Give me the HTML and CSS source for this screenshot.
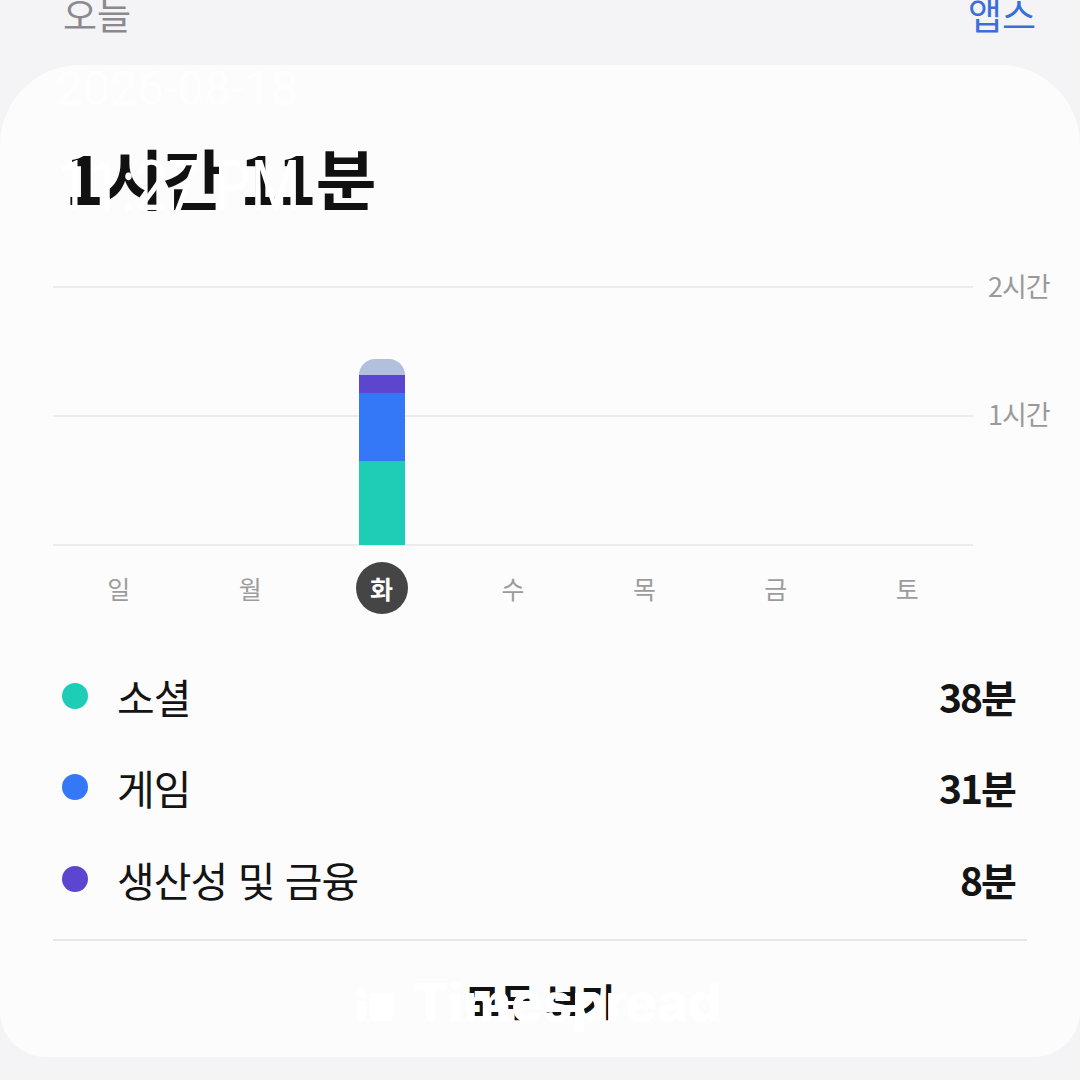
FILE: index.html
```html
<!DOCTYPE html>
<html lang="ko">
<head>
    <meta charset="UTF-8">
    <meta name="viewport" content="width=device-width, initial-scale=1.0">
    <title>오늘 - 스크린 타임</title>
    <link rel="stylesheet" href="styles.css">
</head>
<body>
    <header class="top-bar">
        <span class="tab-title">오늘</span>
        <span class="tab-link">앱스</span>
    </header>

    <main class="card">
        <h1 class="total">1시간 11분</h1>

        <section class="chart">
            <div class="chart-body">
                <div class="plot">
                    <div class="col"></div>
                    <div class="col"></div>
                    <div class="col">
                        <div class="bar">
                            <span class="seg seg-other" style="height: 16px"></span>
                            <span class="seg seg-prod" style="height: 18px"></span>
                            <span class="seg seg-game" style="height: 68px"></span>
                            <span class="seg seg-social" style="height: 84px"></span>
                        </div>
                    </div>
                    <div class="col"></div>
                    <div class="col"></div>
                    <div class="col"></div>
                    <div class="col"></div>
                </div>
                <div class="axis">
                    <span>2시간</span>
                    <span>1시간</span>
                </div>
            </div>
            <div class="days">
                <span>일</span>
                <span>월</span>
                <span class="today">화</span>
                <span>수</span>
                <span>목</span>
                <span>금</span>
                <span>토</span>
            </div>
        </section>

        <ul class="legend">
            <li><i class="dot social"></i><span class="name">소셜</span><b>38분</b></li>
            <li><i class="dot game"></i><span class="name">게임</span><b>31분</b></li>
            <li><i class="dot prod"></i><span class="name">생산성 및 금융</span><b>8분</b></li>
        </ul>

        <div class="more">모두 보기</div>

        <!-- stamp overlay from the capture app -->
        <div class="stamp-date">2026-08-18</div>
        <div class="stamp-time">11:27 PM</div>
        <div class="stamp-mark">
            <svg width="40" height="40" viewBox="0 0 40 40">
                <rect x="2" y="6" width="9" height="9" fill="#fff"/>
                <rect x="2" y="18" width="9" height="20" fill="#fff"/>
                <rect x="15" y="10" width="23" height="28" fill="#fff"/>
            </svg>
            <span>Timespread</span>
        </div>
    </main>
</body>
</html>
```

FILE: styles.css
```css
body {
    margin: 0;
    padding: 0;
    background-color: #f4f4f6;
    font-family: "Noto Sans CJK KR", "Noto Sans", sans-serif;
    overflow: hidden;
}

.top-bar {
    display: flex;
    justify-content: space-between;
    align-items: flex-end;
    height: 65px;
    padding: 0 44px 0 63px;
    box-sizing: border-box;
    font-size: 37px;
    line-height: 1;
    overflow: hidden;
}

.tab-title {
    color: #8a8a8e;
    padding-bottom: 32px;
}

.tab-link {
    color: #3a6fd8;
    padding-bottom: 32px;
}

.card {
    position: relative;
    background-color: #fcfcfc;
    height: 992px;
    border-radius: 80px 80px 46px 46px;
    padding: 0 53px;
    box-sizing: border-box;
}

.total {
    margin: 0;
    padding-top: 78px;
    padding-left: 12px;
    font-size: 66px;
    font-weight: 700;
    line-height: 1;
    color: #111;
    letter-spacing: -1px;
}

.chart {
    margin-top: 77px;
}

.chart-body {
    display: flex;
}

.plot {
    flex: 0 0 920px;
    height: 260px;
    display: flex;
    align-items: flex-end;
    background:
        linear-gradient(#ececec, #ececec) 0 0 / 100% 2px no-repeat,
        linear-gradient(#ececec, #ececec) 0 129px / 100% 2px no-repeat,
        linear-gradient(#ececec, #ececec) 0 258px / 100% 2px no-repeat;
}

.col {
    flex: 1;
    display: flex;
    justify-content: center;
}

.bar {
    width: 46px;
    display: flex;
    flex-direction: column;
    margin-bottom: 1px;
}

.seg {
    display: block;
}

.seg-other {
    background-color: #b2c0dc;
    border-radius: 23px 23px 0 0;
}

.seg-prod {
    background-color: #5c45cf;
}

.seg-game {
    background-color: #3478f7;
}

.seg-social {
    background-color: #1dcdb5;
}

.axis {
    display: flex;
    flex-direction: column;
    gap: 94px;
    padding-left: 15px;
    margin-top: -17px;
    font-size: 27px;
    color: #9a9a9a;
    line-height: 34px;
    letter-spacing: -1px;
    white-space: nowrap;
}

.days {
    display: flex;
    width: 920px;
    margin-top: 16px;
}

.days span {
    flex: 1;
    display: flex;
    justify-content: center;
    align-items: center;
    height: 52px;
    font-size: 25px;
    color: #9c9c9c;
}

.days .today {
    flex: 0 0 52px;
    margin: 0 39.7px;
    border-radius: 50%;
    background-color: #454545;
    color: #fff;
    font-weight: 700;
}

.legend {
    list-style: none;
    margin: 36px 0 0;
    padding: 0 12px 0 9px;
}

.legend li {
    display: flex;
    align-items: center;
    height: 91.5px;
    font-size: 41px;
    color: #141414;
}

.legend .name {
    flex: 1;
    letter-spacing: -1px;
}

.legend b {
    font-weight: 700;
    letter-spacing: -2px;
    font-size: 39px;
}

.dot {
    width: 26px;
    height: 26px;
    border-radius: 50%;
    margin-right: 29px;
}

.dot.social {
    background-color: #1dcdb5;
}

.dot.game {
    background-color: #3478f7;
}

.dot.prod {
    background-color: #5c45cf;
}

.more {
    border-top: 2px solid #e6e6e6;
    margin-top: 14px;
    padding-top: 40px;
    text-align: center;
    font-size: 38px;
    font-weight: 700;
    color: #111;
    line-height: 1;
}

.stamp-date {
    position: absolute;
    left: 56px;
    top: 0;
    font-family: Roboto, sans-serif;
    font-size: 48px;
    color: rgba(255, 255, 255, 0.9);
    line-height: 1;
}

.stamp-time {
    position: absolute;
    left: 57px;
    top: 86px;
    font-family: Roboto, sans-serif;
    font-size: 70px;
    color: #fff;
    line-height: 1;
    transform: scaleX(0.82);
    transform-origin: left;
}

.stamp-mark {
    position: absolute;
    left: 355px;
    top: 912px;
    display: flex;
    align-items: center;
    gap: 18px;
    font-family: Inter, sans-serif;
    font-size: 52px;
    font-weight: 800;
    color: #fff;
    line-height: 1;
}
```
